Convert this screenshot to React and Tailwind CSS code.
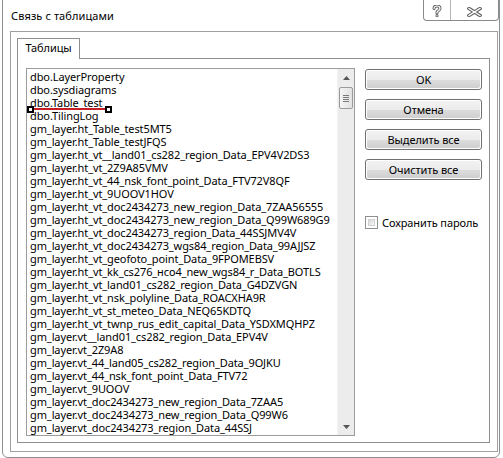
import React from "react";

const items = [
  "dbo.LayerProperty",
  "dbo.sysdiagrams",
  "dbo.Table_test",
  "dbo.TilingLog",
  "gm_layer.ht_Table_test5MT5",
  "gm_layer.ht_Table_testJFQS",
  "gm_layer.ht_vt__land01_cs282_region_Data_EPV4V2DS3",
  "gm_layer.ht_vt_2Z9A85VMV",
  "gm_layer.ht_vt_44_nsk_font_point_Data_FTV72V8QF",
  "gm_layer.ht_vt_9UOOV1HOV",
  "gm_layer.ht_vt_doc2434273_new_region_Data_7ZAA56555",
  "gm_layer.ht_vt_doc2434273_new_region_Data_Q99W689G9",
  "gm_layer.ht_vt_doc2434273_region_Data_44SSJMV4V",
  "gm_layer.ht_vt_doc2434273_wgs84_region_Data_99AJJSZ",
  "gm_layer.ht_vt_geofoto_point_Data_9FPOMEBSV",
  "gm_layer.ht_vt_kk_cs276_нсо4_new_wgs84_r_Data_BOTLS",
  "gm_layer.ht_vt_land01_cs282_region_Data_G4DZVGN",
  "gm_layer.ht_vt_nsk_polyline_Data_ROACXHA9R",
  "gm_layer.ht_vt_st_meteo_Data_NEQ65KDTQ",
  "gm_layer.ht_vt_twnp_rus_edit_capital_Data_YSDXMQHPZ",
  "gm_layer.vt__land01_cs282_region_Data_EPV4V",
  "gm_layer.vt_2Z9A8",
  "gm_layer.vt_44_land05_cs282_region_Data_9OJKU",
  "gm_layer.vt_44_nsk_font_point_Data_FTV72",
  "gm_layer.vt_9UOOV",
  "gm_layer.vt_doc2434273_new_region_Data_7ZAA5",
  "gm_layer.vt_doc2434273_new_region_Data_Q99W6",
  "gm_layer.vt_doc2434273_region_Data_44SSJ",
];

function HelpGlyph() {
  return (
    <svg width="10" height="12" viewBox="0 0 10 12">
      <g fill="none" strokeLinecap="round" strokeLinejoin="round">
        <path d="M2 3.6 C2 1.8 3.4 1 5 1 C6.8 1 8 2 8 3.5 C8 5 6.6 5.4 5.6 6.2 C5 6.7 5 7.2 5 8" stroke="#5c5c5c" strokeWidth="3" />
        <path d="M5 10.6 L5 10.8" stroke="#5c5c5c" strokeWidth="3" />
        <path d="M2 3.6 C2 1.8 3.4 1 5 1 C6.8 1 8 2 8 3.5 C8 5 6.6 5.4 5.6 6.2 C5 6.7 5 7.2 5 8" stroke="#ffffff" strokeWidth="1.2" />
        <path d="M5 10.6 L5 10.8" stroke="#ffffff" strokeWidth="1.2" />
      </g>
    </svg>
  );
}

function CloseGlyph() {
  return (
    <svg width="15" height="10" viewBox="0 0 15 10">
      <g fill="none" strokeLinecap="square">
        <path d="M2 1.5 L13 8.5 M13 1.5 L2 8.5" stroke="#5c5c5c" strokeWidth="3.4" />
        <path d="M2 1.5 L13 8.5 M13 1.5 L2 8.5" stroke="#ffffff" strokeWidth="1.4" />
      </g>
    </svg>
  );
}

function WinButton({ children }) {
  return (
    <div className="h-[21px] w-[117px] rounded-[3px] border border-[#707070] p-px">
      <div className="h-full w-full rounded-[2px] bg-[linear-gradient(to_bottom,#f2f2f2_0%,#ebebeb_50%,#dddddd_51%,#cfcfcf_100%)] flex items-center justify-center leading-[13px]">
        {children}
      </div>
    </div>
  );
}

function Scrollbar() {
  return (
    <div className="w-[17px] h-full bg-[#ececec] border-l border-[#f4f4f4] flex flex-col">
      <div className="h-[17px] flex items-center justify-center">
        <svg width="7" height="4" viewBox="0 0 7 4">
          <path d="M3.5 0 L7 4 L0 4 Z" fill="#555" />
        </svg>
      </div>
      <div className="mt-[1px] ml-[1px] w-[14px] h-[22px] rounded-[2px] border border-[#9a9a9a] bg-[linear-gradient(to_right,#f4f4f4,#e2e2e2)] flex flex-col items-center justify-center gap-[1px]">
        <div className="w-[6px] h-px bg-[#7a7a7a]" />
        <div className="w-[6px] h-px bg-[#7a7a7a]" />
        <div className="w-[6px] h-px bg-[#7a7a7a]" />
        <div className="w-[6px] h-px bg-[#7a7a7a]" />
      </div>
      <div className="flex-1" />
      <div className="h-[17px] flex items-center justify-center">
        <svg width="7" height="4" viewBox="0 0 7 4">
          <path d="M0 0 L7 0 L3.5 4 Z" fill="#555" />
        </svg>
      </div>
    </div>
  );
}

export default function App() {
  return (
    <div className="w-[503px] h-[458px] overflow-hidden bg-white pl-[2px] font-['Noto_Sans',sans-serif] text-[11px] tracking-[-0.1px] text-black">
      <div className="-mt-[5px] w-[498px] h-[463px] border border-[#8e8e8e] rounded-[6px] flex flex-col">
        {/* Title bar */}
        <div className="h-[35px] flex justify-between items-start">
          <div className="pl-[8px] pt-[12px] tracking-[0.1px] leading-[16px]">Связь с таблицами</div>
          <div className="flex h-[25px] w-[76px] border border-t-0 border-[#8a8a8a] rounded-b-[4px] bg-white">
            <div className="w-[27px] border-r border-[#b5b5b5] flex items-end justify-center pb-[3px]">
              <HelpGlyph />
            </div>
            <div className="flex-1 flex items-end justify-center pb-[3px]">
              <CloseGlyph />
            </div>
          </div>
        </div>

        {/* Tab control frame */}
        <div className="ml-[7px] w-[488px] h-[421px] border border-[#a0a0a0] pl-[6px] pt-[6px] flex flex-col">
          <div className="relative z-10 -mb-px w-[63px] h-[21px] border border-b-0 border-[#8e8f8f] bg-white flex justify-center pt-[2px] leading-[13px]">
            Таблицы
          </div>
          <div className="w-[473px] h-[385px] border border-[#8e8f8f] bg-white pl-[8px] pt-[9px] flex items-start">
            {/* List box */}
            <div className="relative w-[329px] h-[368px] border border-[#9c9c9c] flex">
              <div className="flex-1 pl-[3px] pt-px overflow-hidden">
                {items.map((t) => (
                  <div key={t} className="h-[13px] leading-[13px] whitespace-nowrap">
                    {t}
                  </div>
                ))}
              </div>
              <Scrollbar />
              {/* annotation: selected line shape under dbo.Table_test */}
              <div className="absolute left-[5px] top-[39px] w-[74px] h-[2px] bg-[#c41e24]" />
              <div className="absolute left-[0px] top-[37px] w-[7px] h-[7px] border-2 border-black bg-white" />
              <div className="absolute left-[78px] top-[37px] w-[7px] h-[7px] border-2 border-black bg-white" />
            </div>

            {/* Right column */}
            <div className="ml-[10px] mt-px flex flex-col">
              <div className="flex flex-col gap-[9px]">
                <WinButton>OK</WinButton>
                <WinButton>Отмена</WinButton>
                <WinButton>Выделить все</WinButton>
                <WinButton>Очистить все</WinButton>
              </div>
              <div className="mt-[36px] flex items-center">
                <div className="w-[13px] h-[13px] border border-[#8e8f8f] p-[2px] bg-white">
                  <div className="w-full h-full bg-[linear-gradient(135deg,#d8d8d8,#f8f8f8)] border border-[#d0d0d0]" />
                </div>
                <span className="ml-[4px] leading-[13px]">Сохранить пароль</span>
              </div>
            </div>
          </div>
        </div>
      </div>
    </div>
  );
}
